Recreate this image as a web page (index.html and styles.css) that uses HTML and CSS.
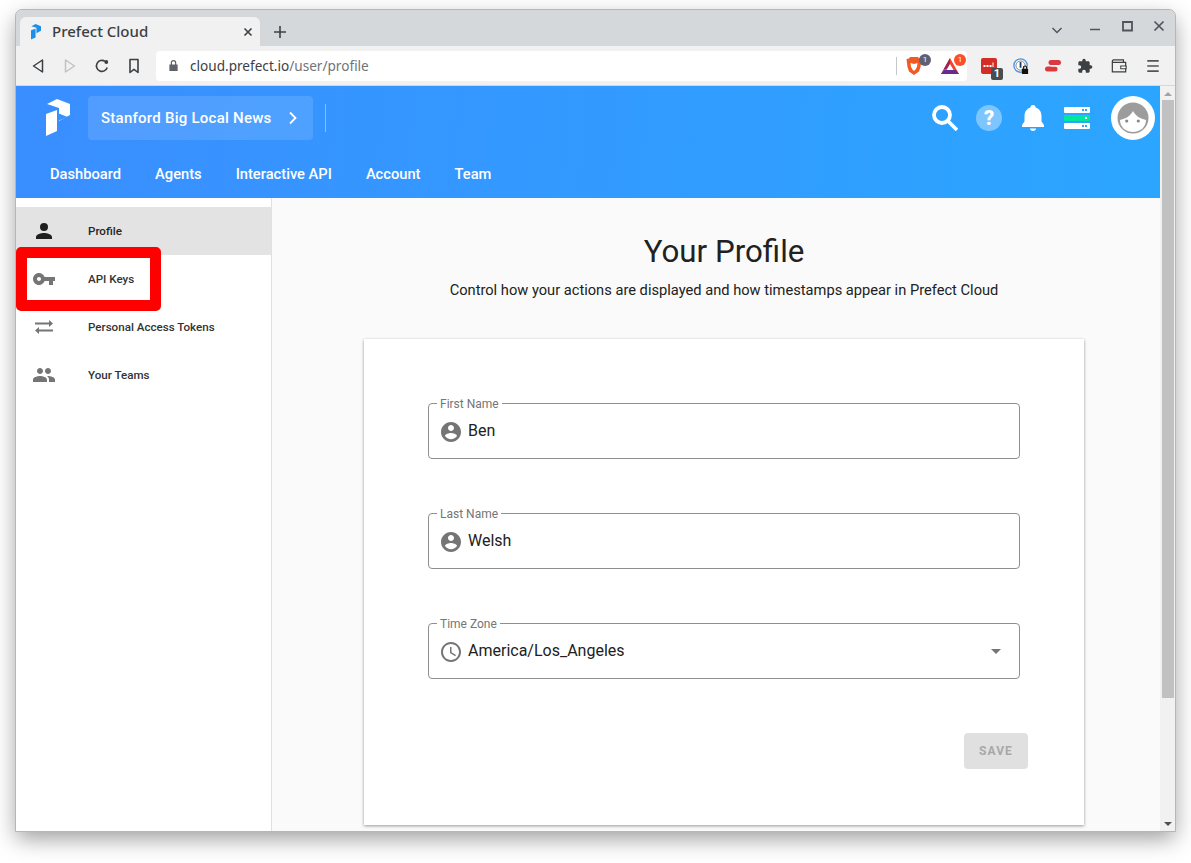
FILE: index.html
```html
<!DOCTYPE html>
<html>
<head>
    <meta charset="UTF-8">
    <title>Prefect Cloud</title>
    <link rel="stylesheet" href="styles.css">
</head>
<body>
    <div class="window">
        <div class="tabstrip">
            <div class="tab">
                <svg class="favicon" viewBox="0 0 24 38"><path d="M1 5 11 0l13 5v11l-11 6V9z" fill="#1c8fe8"/><path d="M0 15l11-4v21L0 37z" fill="#1c8fe8"/></svg>
                <span class="tab-title">Prefect Cloud</span>
                <svg class="tab-close" viewBox="0 0 10 10"><path d="M1.5 1.5l7 7M8.5 1.5l-7 7" stroke="#3c4043" stroke-width="1.6"/></svg>
            </div>
            <svg class="new-tab" viewBox="0 0 12 12"><path d="M6 0v12M0 6h12" stroke="#3c4043" stroke-width="1.6"/></svg>
            <div class="win-controls">
                <svg class="win-icon win-chevron" viewBox="0 0 12 12"><path d="M1.5 4l4.5 4.5L10.5 4" stroke="#50555a" stroke-width="1.5" fill="none"/></svg>
                <svg class="win-icon" viewBox="0 0 12 12"><path d="M1 9.5h10" stroke="#50555a" stroke-width="1.6"/></svg>
                <svg class="win-icon" viewBox="0 0 12 12"><path d="M2 2h9v8.5H2z" stroke="#50555a" stroke-width="1.8" fill="none"/></svg>
                <svg class="win-icon" viewBox="0 0 12 12"><path d="M1.5 1.5l9 9M10.5 1.5l-9 9" stroke="#50555a" stroke-width="1.7"/></svg>
            </div>
        </div>

        <div class="toolbar">
            <div class="nav-buttons">
                <svg class="tool-icon" viewBox="0 0 16 16"><path d="M12.5 2v12L3.5 8z" fill="none" stroke="#3c4043" stroke-width="1.5" stroke-linejoin="round"/></svg>
                <svg class="tool-icon" viewBox="0 0 16 16"><path d="M3.5 2v12l9-6z" fill="none" stroke="#c0c2c5" stroke-width="1.5" stroke-linejoin="round"/></svg>
                <svg class="tool-icon" viewBox="0 0 16 16"><path d="M13.2 9.500A5.5 5.5 0 1 1 11 3.300" fill="none" stroke="#3c4043" stroke-width="1.6"/><circle cx="12.3" cy="4" r="1.9" fill="#3c4043"/></svg>
                <svg class="tool-icon" viewBox="0 0 16 16"><path d="M4 1.500h8v13L8 11.300 4 14.500z" fill="none" stroke="#3c4043" stroke-width="1.6" stroke-linejoin="round"/></svg>
            </div>
            <div class="address">
                <svg class="lock" viewBox="0 0 12 14"><path d="M3 6V4a3 3 0 0 1 6 0v2h1.500v7h-9V6H3zm1.300 0h3.400V4a1.700 1.700 0 0 0-3.400 0v2z" fill="#5f6368"/></svg>
                <span class="url">cloud.prefect.io<span class="url-path">/user/profile</span></span>
                <span class="address-sep"></span>
                <div class="shield">
                    <svg class="brave-icon" viewBox="0 0 16 18"><path d="M4 0h8l1 1.500 2.500.5-1 8-1.500 4.500L8 18l-5-3.500L1.500 10l-1-8L3 1.500z" fill="#f15a22"/><path d="M4.500 6 8 7l3.500-1L11 10l-1.500 2.500L8 14l-1.500-1.500L5 10z" fill="#fff"/></svg>
                    <span class="badge badge-grey">1</span>
                </div>
                <div class="shield">
                    <svg class="bat-icon" viewBox="0 0 18 16"><path d="M9 0l9 16H0z" fill="#f0442b"/><path d="M4.500 8 9 0v6L6 11H3L0 16z" fill="#9e1f63"/><path d="M0 16l3-4h12l3 4z" fill="#662d91"/><path d="M9 6l3.500 6h-7z" fill="#fff"/></svg>
                    <span class="badge badge-red">1</span>
                </div>
            </div>
            <div class="extensions">
                <div class="ext-slot">
                    <svg class="ext-icon" viewBox="0 0 16 16"><rect width="16" height="16" rx="2" fill="#d32d27"/><path d="M2.500 7h2v2h-2zm3 0h2v2h-2zm3 0h2v2h-2zm3-2.500h1V9h-1z" fill="#fff"/></svg>
                    <span class="square-badge">1</span>
                </div>
                <div class="ext-slot">
                    <svg class="ext-icon" viewBox="0 0 18 18"><circle cx="8.5" cy="8.5" r="7.5" fill="#fff" stroke="#4a94e0" stroke-width="1.5"/><circle cx="8.5" cy="8.5" r="5.2" fill="none" stroke="#777" stroke-width="1"/><path d="M7.500 4.500h2V11h-2z" fill="#1a3a5c"/><path d="M11 12v-1a2.500 2.500 0 0 1 5 0v1h1v6h-7v-6zm1.200 0h2.600v-1a1.300 1.300 0 0 0-2.600 0z" fill="#111"/></svg>
                </div>
                <div class="ext-slot">
                    <svg class="ext-icon" viewBox="0 0 16 16"><path d="M6 4.500h7.500M2.500 11H10" stroke="#da3940" stroke-width="5" stroke-linecap="round"/><path d="M6 8h6" stroke="#fff" stroke-width="1.2"/></svg>
                </div>
                <div class="ext-slot">
                    <svg class="ext-icon" viewBox="0 0 24 24"><path d="M20.500 11H19V7c0-1.100-.9-2-2-2h-4V3.500a2.500 2.500 0 0 0-5 0V5H4c-1.100 0-2 .9-2 2v3.800h1.500c1.500 0 2.700 1.200 2.700 2.700S5 16.200 3.500 16.200H2V20c0 1.100.9 2 2 2h3.800v-1.500c0-1.500 1.200-2.700 2.700-2.700s2.700 1.200 2.700 2.700V22H17c1.100 0 2-.9 2-2v-4h1.500a2.500 2.500 0 0 0 0-5z" fill="#3c4043"/></svg>
                </div>
                <div class="ext-slot ext-wallet">
                    <svg class="ext-icon" viewBox="0 0 18 16"><path d="M3 1h11v3M1.500 4.500V3C1.500 2 2 1 3 1M1.500 4h15v10.500h-15z" fill="none" stroke="#3c4043" stroke-width="1.4"/><path d="M11 8h6v3h-6z" fill="#fff" stroke="#3c4043" stroke-width="1.2"/></svg>
                </div>
                <div class="ext-slot ext-menu">
                    <svg class="ext-icon" viewBox="0 0 12 14"><path d="M1 2.500h10M1 7h10M1 11.500h10" stroke="#50555a" stroke-width="1.5"/></svg>
                </div>
            </div>
        </div>

        <div class="viewport">
            <div class="app">
                <header class="appbar">
                    <div class="appbar-top">
                        <svg class="logo" viewBox="0 0 24 38"><path d="M1 5 11 0l13 5v11l-11 6V9z" fill="#fff"/><path d="M0 15l11-4v21L0 37z" fill="#fff"/><path d="M13 14.500l8.500 3.500-8.500 3.500z" fill="#3a90ff"/></svg>
                        <div class="team-btn">
                            <span>Stanford Big Local News</span>
                            <svg class="chev" viewBox="0 0 10 14"><path d="M2 1.500L7.500 7 2 12.500" fill="none" stroke="#fff" stroke-width="1.8"/></svg>
                        </div>
                        <span class="appbar-sep"></span>
                        <div class="appbar-actions">
                            <svg class="action-search" viewBox="0 0 26 26"><circle cx="10" cy="10" r="8" fill="none" stroke="#fff" stroke-width="3.8"/><path d="M16 16l9 9" stroke="#fff" stroke-width="3.6"/></svg>
                            <div class="help">?</div>
                            <svg class="action-bell" viewBox="0 0 24 26"><path d="M12 26c1.800 0 3-1 3-2.500H9c0 1.500 1.200 2.500 3 2.500zm8.500-9.500V11c0-4.500-2.500-7.500-6-8.500V2c0-1.200-1.100-2-2.500-2S9.500.8 9.500 2v.5c-3.500 1-6 4-6 8.500v5.500L1 20v2h22v-2l-2.500-3.500z" fill="#fff"/></svg>
                            <div class="servers">
                                <span class="server"><i></i><i></i></span>
                                <span class="server server-on"><i></i></span>
                                <span class="server"><i></i><i></i></span>
                            </div>
                            <div class="avatar">
                                <svg viewBox="0 0 44 44"><circle cx="22" cy="22" r="22" fill="#fff"/><circle cx="22" cy="22" r="15.5" fill="#9c9c9c"/><path d="M9 24c4-1 10-3 13-9 3 6 9 8 13 9 0 7-5.500 12-13 12S9 31 9 24z" fill="#fff"/><circle cx="15.7" cy="25" r="1.6" fill="#888"/><circle cx="27.3" cy="25" r="1.6" fill="#888"/></svg>
                            </div>
                        </div>
                    </div>
                    <nav class="appbar-nav">
                        <a>Dashboard</a>
                        <a>Agents</a>
                        <a>Interactive API</a>
                        <a>Account</a>
                        <a>Team</a>
                    </nav>
                </header>

                <div class="content">
                    <aside class="sidebar">
                        <div class="side-item active">
                            <svg class="side-icon" viewBox="0 0 24 24"><path d="M12 4a4 4 0 0 1 0 8 4 4 0 0 1 0-8zm0 10c2.670 0 8 1.340 8 4v2H4v-2c0-2.660 5.330-4 8-4z" fill="#1f1f1f"/></svg>
                            <span>Profile</span>
                        </div>
                        <div class="side-item">
                            <svg class="side-icon" viewBox="0 0 24 24"><path d="M12.650 10C11.830 7.670 9.610 6 7 6c-3.310 0-6 2.690-6 6s2.690 6 6 6c2.610 0 4.830-1.670 5.650-4H17v4h4v-4h2v-4H12.650zM7 14c-1.100 0-2-.9-2-2s.9-2 2-2 2 .9 2 2-.9 2-2 2z"/></svg>
                            <span>API Keys</span>
                        </div>
                        <div class="side-item">
                            <svg class="side-icon" viewBox="0 0 24 24"><path d="M17 5l4 3.500-4 3.500V9.500H3v-2h14zM7 12l-4 3.500L7 19v-2.500h14v-2H7z"/></svg>
                            <span>Personal Access Tokens</span>
                        </div>
                        <div class="side-item">
                            <svg class="side-icon" viewBox="0 0 24 24"><path d="M16 11c1.660 0 2.990-1.340 2.990-3S17.660 5 16 5c-1.660 0-3 1.340-3 3s1.340 3 3 3zm-8 0c1.660 0 2.990-1.340 2.990-3S9.660 5 8 5C6.340 5 5 6.340 5 8s1.340 3 3 3zm0 2c-2.330 0-7 1.170-7 3.500V19h14v-2.500c0-2.330-4.670-3.500-7-3.500zm8 0c-.29 0-.62.020-.97.050 1.160.84 1.970 1.970 1.970 3.450V19h6v-2.500c0-2.330-4.670-3.500-7-3.500z"/></svg>
                            <span>Your Teams</span>
                        </div>
                    </aside>

                    <main class="main">
                        <h1 class="title">Your Profile</h1>
                        <p class="subtitle">Control how your actions are displayed and how timestamps appear in Prefect Cloud</p>
                        <section class="card">
                            <div class="field">
                                <label class="field-label">First Name</label>
                                <svg class="field-icon" viewBox="0 0 24 24"><path d="M12 2C6.480 2 2 6.480 2 12s4.480 10 10 10 10-4.480 10-10S17.520 2 12 2zm0 3c1.660 0 3 1.340 3 3s-1.340 3-3 3-3-1.340-3-3 1.340-3 3-3zm0 14.200c-2.500 0-4.710-1.280-6-3.220.03-1.990 4-3.080 6-3.080 1.990 0 5.970 1.090 6 3.080-1.290 1.940-3.500 3.220-6 3.220z"/></svg>
                                <span class="field-value">Ben</span>
                            </div>
                            <div class="field">
                                <label class="field-label">Last Name</label>
                                <svg class="field-icon" viewBox="0 0 24 24"><path d="M12 2C6.480 2 2 6.480 2 12s4.480 10 10 10 10-4.480 10-10S17.520 2 12 2zm0 3c1.660 0 3 1.340 3 3s-1.340 3-3 3-3-1.340-3-3 1.340-3 3-3zm0 14.200c-2.500 0-4.710-1.280-6-3.220.03-1.990 4-3.080 6-3.080 1.990 0 5.970 1.090 6 3.080-1.290 1.940-3.500 3.220-6 3.220z"/></svg>
                                <span class="field-value">Welsh</span>
                            </div>
                            <div class="field">
                                <label class="field-label">Time Zone</label>
                                <svg class="field-icon" viewBox="0 0 24 24"><path d="M11.990 2C6.470 2 2 6.480 2 12s4.470 10 9.990 10C17.520 22 22 17.520 22 12S17.520 2 11.990 2zM12 20c-4.420 0-8-3.580-8-8s3.580-8 8-8 8 3.580 8 8-3.580 8-8 8zm.5-13H11v6l5.250 3.150.75-1.230-4.500-2.670z"/></svg>
                                <span class="field-value">America/Los_Angeles</span>
                                <span class="caret"></span>
                            </div>
                            <div class="card-actions">
                                <button class="save">SAVE</button>
                            </div>
                        </section>
                    </main>
                </div>
            </div>

            <div class="scrollbar">
                <span class="arrow-up"></span>
                <span class="thumb"></span>
                <span class="arrow-down"></span>
            </div>

            <!-- annotation drawn on top of the screenshot -->
            <div class="highlight"></div>
        </div>
    </div>
</body>
</html>
```

FILE: styles.css
```css
* {
    box-sizing: border-box;
}

html, body {
    margin: 0;
    height: 100%;
    overflow: hidden;
    background: #ffffff;
}

body {
    font-family: Roboto, "Liberation Sans", sans-serif;
}

.window {
    display: flex;
    flex-direction: column;
    width: 1159px;
    height: 821px;
    margin: 10px 0 0 16px;
    overflow: hidden;
    border-radius: 6px 6px 0 0;
    outline: 1px solid #b4b6b8;
    box-shadow: 0 8px 22px rgba(0, 0, 0, 0.38);
}

/* browser chrome */
.tabstrip {
    display: flex;
    align-items: flex-end;
    flex: 0 0 36px;
    padding-left: 4px;
    background: #d5d8db;
}

.tab {
    display: flex;
    align-items: center;
    width: 240px;
    height: 29px;
    padding: 0 7px 0 11px;
    background: #f1f1f2;
    border-radius: 6px 6px 0 0;
}

.favicon {
    width: 10px;
    height: 16px;
}

.tab-title {
    flex: 1;
    margin: -2px 0 0 11px;
    font-family: "Noto Sans", sans-serif;
    font-size: 15px;
    font-weight: 500;
    color: #3c4043;
}

.tab-close {
    width: 10px;
    height: 10px;
}

.new-tab {
    width: 12px;
    height: 12px;
    margin: 0 0 8px 14px;
}

.win-controls {
    display: flex;
    gap: 20px;
    margin-left: auto;
    margin-right: 10px;
    align-self: center;
}

.win-icon {
    width: 12px;
    height: 12px;
}

.win-chevron {
    margin: 4px 6px 0 0;
}

.toolbar {
    display: flex;
    align-items: center;
    flex: 0 0 40px;
    background: #f1f1f2;
    border-bottom: 1px solid #d5d8db;
}

.nav-buttons {
    display: flex;
    gap: 16px;
    padding-left: 14px;
    width: 140px;
}

.tool-icon {
    width: 16px;
    height: 16px;
}

.address {
    display: flex;
    align-items: center;
    width: 811px;
    height: 30px;
    padding-left: 12px;
    background: #ffffff;
    border-radius: 4px;
}

.lock {
    width: 11px;
    height: 13px;
}

.url {
    flex: 1;
    margin-left: 11px;
    font-family: "Noto Sans", sans-serif;
    font-size: 13.6px;
    color: #3c4043;
}

.url-path {
    color: #6f7479;
}

.address-sep {
    width: 1px;
    height: 18px;
    background: #c4c6c8;
}

.shield {
    position: relative;
    display: flex;
    align-items: center;
    width: 26px;
    height: 18px;
    margin-left: 9px;
}

.brave-icon {
    width: 16px;
    height: 18px;
}

.bat-icon {
    width: 18px;
    height: 16px;
}

.ext-icon {
    width: 16px;
    height: 16px;
}

.badge {
    position: absolute;
    top: -3px;
    left: 13px;
    width: 12px;
    height: 12px;
    border-radius: 50%;
    font-size: 8px;
    line-height: 12px;
    text-align: center;
    color: #ffffff;
}

.badge-grey {
    background: #5f6073;
}

.badge-red {
    background: #fa4e2c;
}

.extensions {
    display: flex;
    gap: 16px;
    margin-left: 14px;
}

.ext-slot {
    position: relative;
    width: 16px;
    height: 16px;
}

.ext-wallet {
    margin-left: 2px;
}

.ext-menu {
    margin-left: 2px;
}

.square-badge {
    position: absolute;
    top: 10px;
    left: 10px;
    width: 12px;
    height: 12px;
    border-radius: 2px;
    background: #4a4d50;
    font-size: 11px;
    font-weight: 700;
    line-height: 12px;
    text-align: center;
    color: #ffffff;
}

/* page */
.viewport {
    position: relative;
    display: flex;
    flex: 1;
    min-height: 0;
}

.app {
    display: flex;
    flex-direction: column;
    flex: 1;
    min-width: 0;
}

.appbar {
    flex: 0 0 112px;
    background: linear-gradient(95deg, #3a8eff 0%, #2ba6ff 100%);
    color: #ffffff;
}

.appbar-top {
    display: flex;
    align-items: center;
    height: 64px;
    padding-left: 30px;
}

.logo {
    width: 24px;
    height: 38px;
}

.team-btn {
    display: flex;
    align-items: center;
    justify-content: space-between;
    width: 225px;
    height: 44px;
    margin-left: 18px;
    padding: 0 15px 0 13px;
    background: rgba(255, 255, 255, 0.12);
    border-radius: 4px;
    font-size: 15px;
    font-weight: 500;
    letter-spacing: 0.25px;
}

.chev {
    width: 10px;
    height: 14px;
}

.appbar-sep {
    width: 1px;
    height: 28px;
    margin-left: 12px;
    background: rgba(255, 255, 255, 0.4);
}

.appbar-actions {
    display: flex;
    align-items: center;
    margin-left: auto;
    padding-right: 5px;
}

.action-search {
    width: 26px;
    height: 26px;
    margin-right: 18px;
}

.action-bell {
    width: 24px;
    height: 26px;
    margin-right: 19px;
}

.help {
    width: 26px;
    height: 26px;
    margin-right: 19px;
    border-radius: 50%;
    background: rgba(255, 255, 255, 0.38);
    font-size: 20px;
    font-weight: 900;
    line-height: 26px;
    text-align: center;
}

.servers {
    display: flex;
    flex-direction: column;
    gap: 2px;
    width: 26px;
    margin-right: 21px;
}

.server {
    display: flex;
    align-items: center;
    justify-content: flex-end;
    gap: 1px;
    height: 6px;
    padding-right: 3px;
    background: #ffffff;
    border-radius: 1px;
}

.server i {
    width: 2px;
    height: 2px;
    background: #2ba6ff;
}

.server-on {
    background: #00e6a0;
}

.server-on i {
    background: #ffffff;
}

.avatar {
    width: 44px;
    height: 44px;
}

.avatar svg {
    display: block;
    width: 44px;
    height: 44px;
}

.appbar-nav {
    display: flex;
    align-items: center;
    height: 48px;
    padding-left: 17px;
}

.appbar-nav a {
    padding: 0 17px;
    font-size: 14.7px;
    font-weight: 500;
}

.content {
    display: flex;
    flex: 1;
    min-height: 0;
}

.sidebar {
    flex: 0 0 256px;
    padding-top: 9px;
    background: #ffffff;
    border-right: 1px solid #e0e0e0;
}

.side-item {
    display: flex;
    align-items: center;
    height: 48px;
    padding-left: 16px;
    font-size: 11.6px;
    font-weight: 500;
    color: #333333;
}

.side-item.active {
    background: #e3e3e3;
    color: #262626;
}

.side-icon {
    flex: 0 0 24px;
    width: 24px;
    height: 24px;
    margin-right: 32px;
    fill: #757575;
}

.main {
    flex: 1;
    min-width: 0;
    padding: 35px 0 0 92px;
    background: #fafafa;
}

.title {
    width: 720px;
    margin: 0;
    font-size: 31.3px;
    font-weight: 400;
    line-height: 38px;
    text-align: center;
    color: #212121;
}

.subtitle {
    width: 720px;
    margin: 7px 0 0;
    font-size: 14.67px;
    line-height: 24px;
    text-align: center;
    color: #212121;
}

.card {
    width: 720px;
    height: 486px;
    margin-top: 37px;
    padding: 64px 56px 0 64px;
    background: #ffffff;
    box-shadow: 0 1px 3px rgba(0, 0, 0, 0.4);
}

.field {
    position: relative;
    display: flex;
    align-items: center;
    width: 592px;
    height: 56px;
    margin-bottom: 54px;
    padding: 0 10px;
    border: 1px solid #8f8f8f;
    border-radius: 4px;
}

.field-label {
    position: absolute;
    top: -7px;
    left: 8px;
    padding: 0 3px;
    background: #ffffff;
    font-size: 12px;
    line-height: 14px;
    color: #757575;
}

.field-icon {
    width: 24px;
    height: 24px;
    margin-top: 1px;
    fill: #757575;
}

.field-value {
    flex: 1;
    margin: -2px 0 0 5px;
    font-size: 16px;
    color: #212121;
}

.caret {
    width: 0;
    height: 0;
    margin-right: 8px;
    border-left: 5px solid transparent;
    border-right: 5px solid transparent;
    border-top: 5px solid #757575;
}

.card-actions {
    display: flex;
    justify-content: flex-end;
    width: 600px;
}

.save {
    width: 64px;
    height: 36px;
    padding: 0;
    border: 0;
    border-radius: 4px;
    background: #e0e0e0;
    font-family: Roboto, sans-serif;
    font-size: 12px;
    font-weight: 700;
    letter-spacing: 1.1px;
    color: #a8a8a8;
}

.scrollbar {
    display: flex;
    flex-direction: column;
    align-items: center;
    flex: 0 0 15px;
    background: #f1f1f1;
}

.arrow-up {
    width: 0;
    height: 0;
    margin-top: 6px;
    border-left: 4px solid transparent;
    border-right: 4px solid transparent;
    border-bottom: 4px solid #a3a3a3;
}

.thumb {
    width: 12px;
    height: 598px;
    margin-top: 4px;
    background: #c1c1c1;
}

.arrow-down {
    width: 0;
    height: 0;
    margin-top: auto;
    margin-bottom: 5px;
    border-left: 4px solid transparent;
    border-right: 4px solid transparent;
    border-top: 4px solid #505050;
}

.highlight {
    position: absolute;
    top: 161px;
    left: 0;
    width: 145px;
    height: 64px;
    border: 11px solid #ff0000;
    border-radius: 5px;
}
```
